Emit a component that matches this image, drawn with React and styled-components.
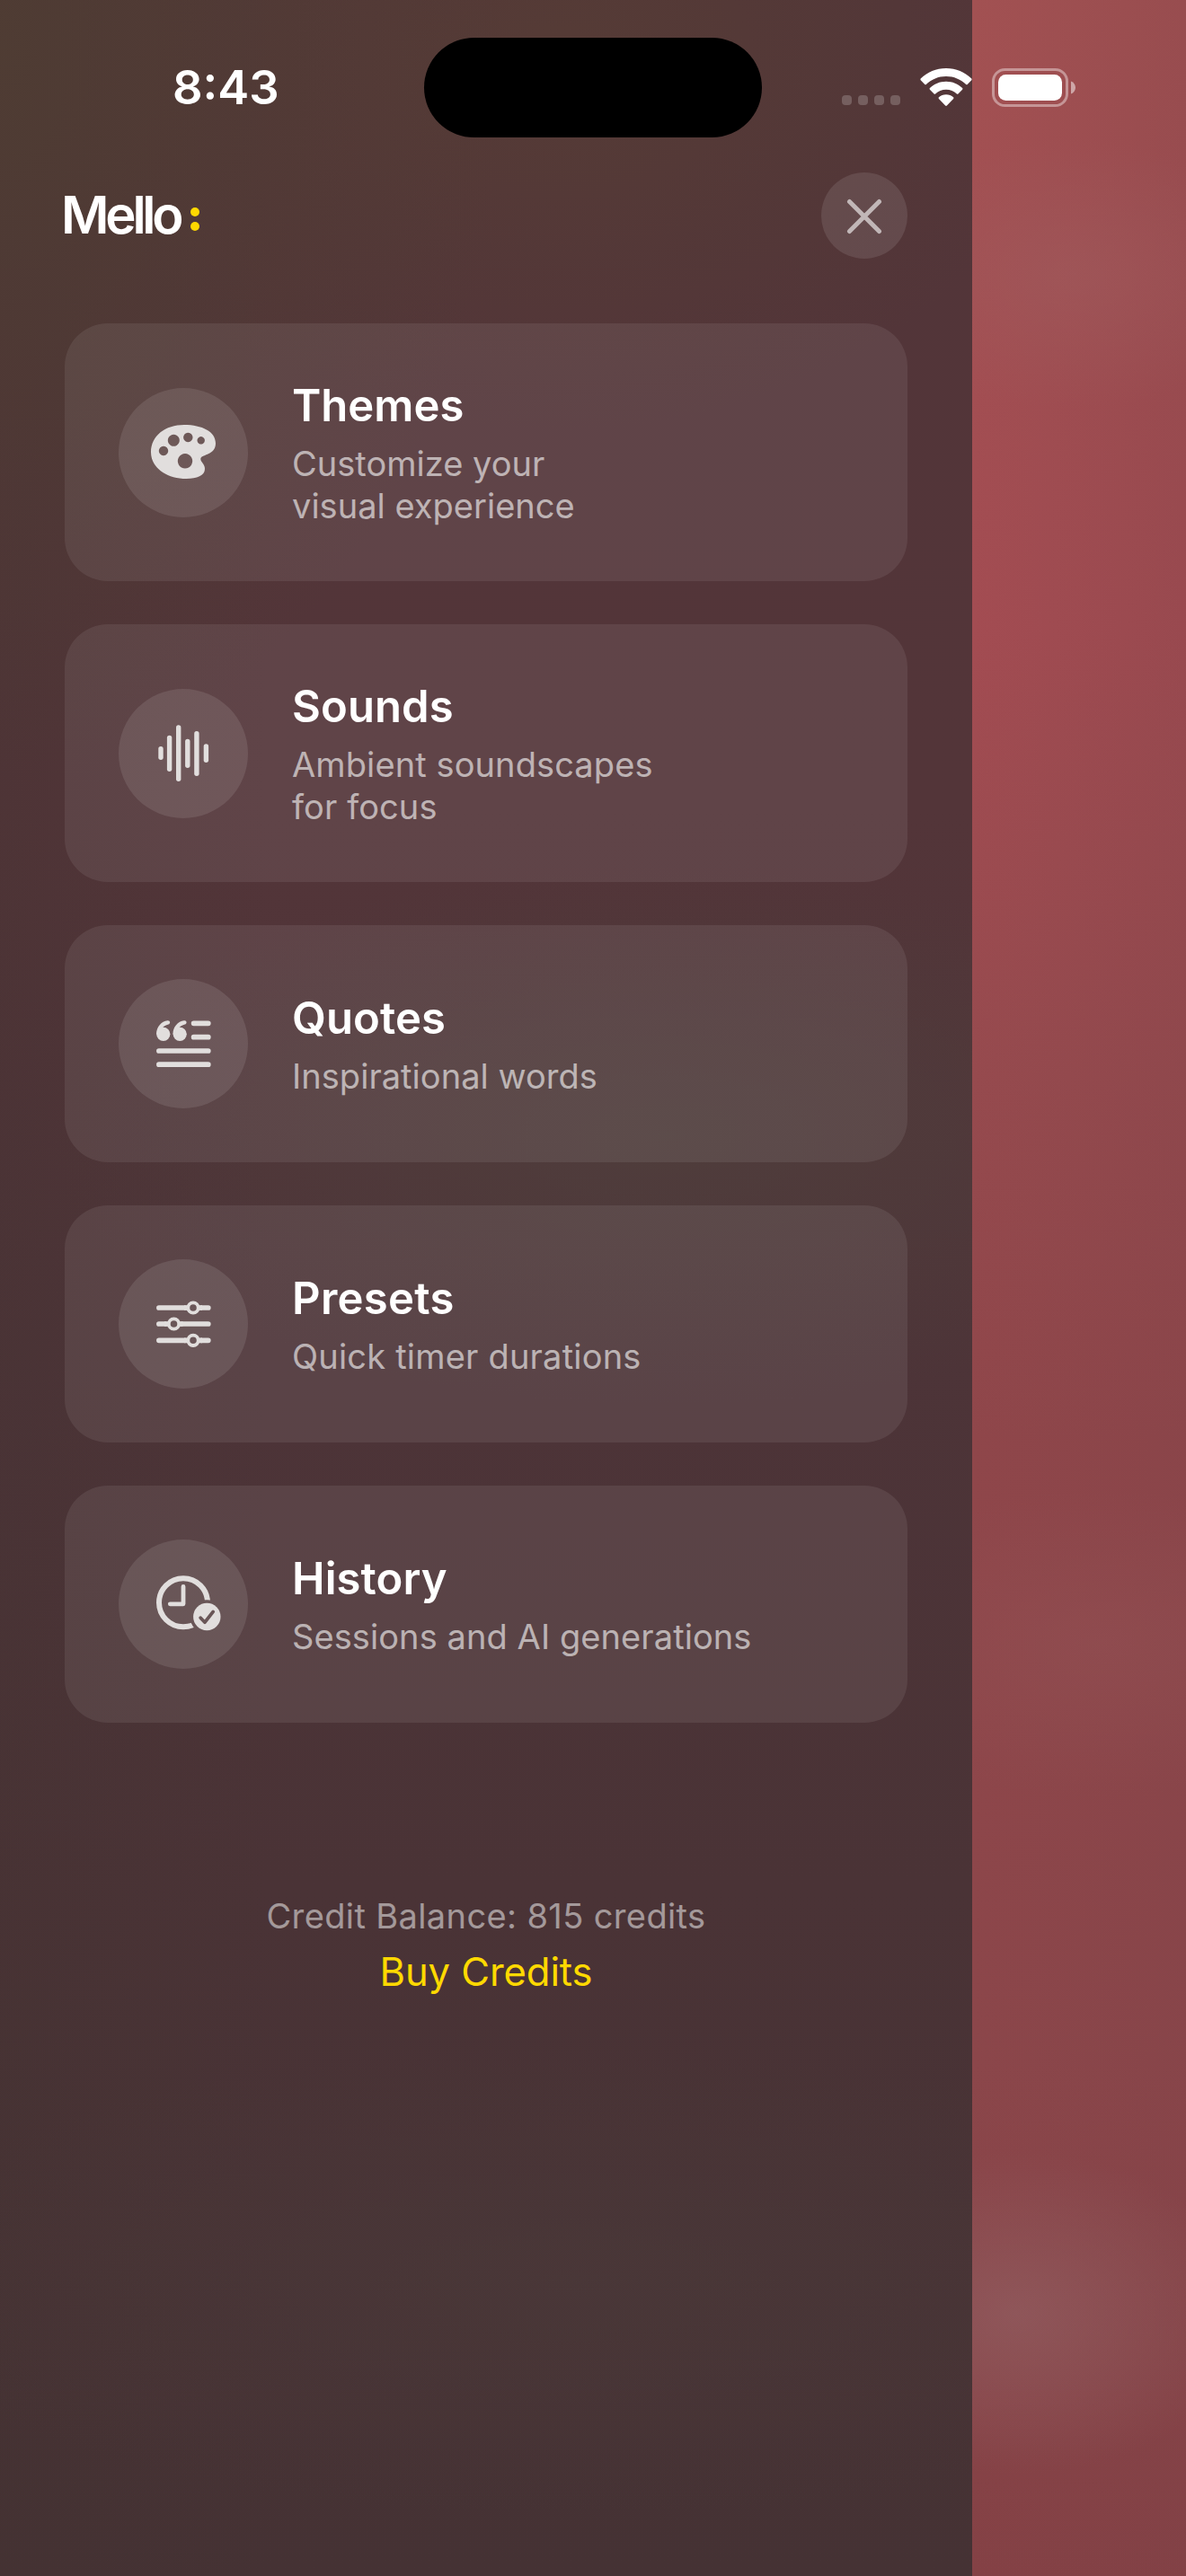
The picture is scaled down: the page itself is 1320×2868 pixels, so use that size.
import React from "react";
import styled, { createGlobalStyle } from "styled-components";

const menuItems = [
	{
		id: "themes",
		title: "Themes",
		lines: ["Customize your", "visual experience"],
		titleSpacing: 0,
		spacing: 0.02,
	},
	{
		id: "sounds",
		title: "Sounds",
		lines: ["Ambient soundscapes", "for focus"],
		titleSpacing: 0.1,
		spacing: 0.1,
	},
	{
		id: "quotes",
		title: "Quotes",
		lines: ["Inspirational words"],
		titleSpacing: 0.1,
		spacing: 0.04,
	},
	{
		id: "presets",
		title: "Presets",
		lines: ["Quick timer durations"],
		titleSpacing: 0.3,
		spacing: 0.2,
	},
	{
		id: "history",
		title: "History",
		lines: ["Sessions and AI generations"],
		titleSpacing: 0.1,
		spacing: 0.08,
	},
];

const soundBars = [
	[47, 64, 79],
	[56.6, 51.7, 92],
	[66.7, 40.3, 103],
	[76.8, 55.7, 88],
	[86.9, 47, 97],
	[97.4, 61.3, 82],
];

const QuoteMark = ({ x }) => (
	<g transform={`translate(${x} 0)`}>
		<circle cx="49.8" cy="61.3" r="7.6" />
		<path d="M42.1 61C42 53.5 47.5 47 54.5 46.2C57.6 45.8 58.2 49.6 55.4 50.5C51.5 51.6 48.6 53.6 47.8 56.5L50 62Z" />
	</g>
);

const icons = {
	themes: (
		<path
			fillRule="evenodd"
			d="M73 41C93 41 108 48.5 108 61.5C108 75.5 91.3 73.5 91.3 79C91.3 82.5 96 84.5 96 90C96 97.5 87 101 75.5 101C53 101 36 88.5 36 71.5C36 53 52 41 73 41ZM50 64.8a5.2 5.2 0 1 0 .01 0ZM61.3 51.8a6.5 6.5 0 1 0 .01 0ZM77.3 49.8a5.2 5.2 0 1 0 .01 0ZM91.7 54.1a4.2 4.2 0 1 0 .01 0ZM74 73.1a8.2 8.2 0 1 0 .01 0Z"
		/>
	),
	sounds: (
		<g stroke="currentColor" strokeWidth="5.4" strokeLinecap="round">
			{soundBars.map(([x, top, bottom]) => (
				<line key={x} x1={x} x2={x} y1={top + 2.7} y2={bottom - 2.7} />
			))}
		</g>
	),
	quotes: (
		<g>
			<QuoteMark x={0} />
			<QuoteMark x={18.4} />
			<g stroke="currentColor" strokeWidth="5.7" strokeLinecap="round">
				<path d="M83.6 49.3H99.8M83.6 64.7H99.8M44.9 80H99.8M44.9 95.2H99.8" />
			</g>
		</g>
	),
	presets: (
		<g fill="none" stroke="currentColor" strokeLinecap="round">
			<path
				strokeWidth="5.7"
				d="M44.9 54H74M92 54H99.8M44.9 72H52M70.5 72H99.8M44.9 90.3H74M92 90.3H99.8"
			/>
			<g strokeWidth="3.8">
				<circle cx="83" cy="54" r="5.7" />
				<circle cx="61.5" cy="72" r="5.7" />
				<circle cx="83" cy="90.3" r="5.7" />
			</g>
			<path
				strokeWidth="5.7"
				strokeLinecap="butt"
				d="M73 54H76.5M89.5 54H93M51 72H55M68 72H71.5M73 90.3H76.5M89.5 90.3H93"
			/>
		</g>
	),
	history: (
		<g>
			<mask id="badge-gap">
				<rect width="144" height="144" fill="#fff" />
				<circle cx="98.3" cy="86" r="18.8" fill="#000" />
			</mask>
			<mask id="badge-check">
				<rect width="144" height="144" fill="#fff" />
				<path
					d="M91.2 87.2L96 92.2L105.2 80.4"
					fill="none"
					stroke="#000"
					strokeWidth="3.8"
					strokeLinecap="round"
					strokeLinejoin="round"
				/>
			</mask>
			<circle
				cx="72"
				cy="70.3"
				r="27"
				fill="none"
				stroke="currentColor"
				strokeWidth="6"
				mask="url(#badge-gap)"
			/>
			<path
				d="M72 52.5V71.8H57.3"
				fill="none"
				stroke="currentColor"
				strokeWidth="4.8"
				strokeLinecap="round"
				strokeLinejoin="round"
			/>
			<circle cx="98.3" cy="86" r="15.2" mask="url(#badge-check)" />
		</g>
	),
};

const App = () => {
	return (
		<>
			<GlobalStyle />
			<Screen>
				<Drawer>
					<Header>
						<Brand>
							<BrandName>Mello</BrandName>
							<BrandDots>
								<i />
								<i />
							</BrandDots>
						</Brand>
						<CloseButton aria-label="Close">
							<svg width="96" height="96" viewBox="0 0 96 96">
								<path d="M31.5 32.5L64.5 65.5M64.5 32.5L31.5 65.5" />
							</svg>
						</CloseButton>
					</Header>

					<Menu>
						{menuItems.map((item) => (
							<Card key={item.id} $tall={item.lines.length > 1}>
								<IconCircle>
									<svg width="144" height="144" viewBox="0 0 144 144" fill="currentColor">
										{icons[item.id]}
									</svg>
								</IconCircle>
								<CardText>
									<CardTitle $spacing={item.titleSpacing}>{item.title}</CardTitle>
									{item.lines.map((line) => (
										<CardLine key={line} $spacing={item.spacing}>
											{line}
										</CardLine>
									))}
								</CardText>
							</Card>
						))}
					</Menu>

					<Footer>
						<Balance>Credit Balance: 815 credits</Balance>
						<BuyLink>Buy Credits</BuyLink>
					</Footer>
				</Drawer>

				{/* system status bar floats over the drawer */}
				<StatusBar>
					<Time>8:43</Time>
					<Island />
					<Indicators>
						<Signal>
							<i />
							<i />
							<i />
							<i />
						</Signal>
						<svg width="58" height="43" viewBox="0 0 58 43">
							<path
								fill="#fff"
								d="M29 0C40 0 50 4.4 57.3 11.6Q58 12.4 57.3 13.2L52.7 18Q52 18.7 51.2 18C45.4 12.4 37.6 9 29 9S12.6 12.4 6.8 18Q6 18.7 5.3 18L.7 13.2Q0 12.4 .7 11.6C8 4.4 18 0 29 0ZM29 14.7C36 14.7 42.4 17.5 47.1 22Q47.9 22.9 47.1 23.7L42.4 28.5Q41.7 29.2 40.9 28.5C37.8 25.6 33.6 23.8 29 23.8S20.2 25.6 17.1 28.5Q16.3 29.2 15.6 28.5L10.9 23.7Q10.1 22.9 10.9 22C15.6 17.5 22 14.7 29 14.7ZM29 29.3C32.2 29.3 35 30.4 37.1 32.3Q37.9 33.1 37.1 33.9L29.9 41.5Q29 42.4 28.1 41.5L20.9 33.9Q20.1 33.1 20.9 32.3C23 30.4 25.8 29.3 29 29.3Z"
							/>
						</svg>
						<svg width="94" height="43" viewBox="0 0 94 43">
							<rect
								x="1.5"
								y="1.5"
								width="82"
								height="40"
								rx="13"
								fill="none"
								stroke="#fff"
								strokeOpacity="0.4"
								strokeWidth="3"
							/>
							<rect x="7" y="7" width="71" height="29" rx="8.5" fill="#fff" />
							<path d="M88 14.5C91 15.6 93 18.3 93 21.5S91 27.4 88 28.5Z" fill="#fff" fillOpacity="0.5" />
						</svg>
					</Indicators>
				</StatusBar>
			</Screen>
		</>
	);
};

export default App;

const GlobalStyle = createGlobalStyle`
	* {
		box-sizing: border-box;
	}

	body {
		margin: 0;
		font-family: Inter, "Liberation Sans", sans-serif;
	}
`;

const Screen = styled.div`
	position: relative;
	width: 1320px;
	height: 2868px;
	overflow: hidden;
	background:
		radial-gradient(ellipse 240px 150px at 1190px 305px, rgba(160, 92, 94, 0.5), transparent),
		radial-gradient(ellipse 320px 170px at 1220px 1830px, rgba(146, 80, 83, 0.55), transparent),
		radial-gradient(ellipse 260px 180px at 1130px 2575px, rgba(146, 94, 97, 0.7), transparent),
		linear-gradient(90deg, transparent 1082px, rgba(126, 66, 72, 0.28) 1320px),
		linear-gradient(180deg, #a25152 0, #a34c52 700px, #964a4e 1200px, #8f464a 1600px, #8e464a 1900px, #8b464a 2300px, #844145 2868px);
`;

const Drawer = styled.aside`
	width: 1082px;
	height: 2868px;
	padding: 192px 72px 0;
	display: flex;
	flex-direction: column;
	background:
		radial-gradient(ellipse 560px 800px at 0 60px, rgba(79, 61, 51, 0.9), transparent),
		radial-gradient(ellipse 560px 420px at 620px 60px, rgba(86, 61, 53, 0.8), transparent),
		radial-gradient(ellipse 680px 300px at 740px 1265px, rgba(79, 64, 61, 0.75), transparent),
		radial-gradient(ellipse 800px 260px at 640px 2540px, rgba(74, 57, 57, 0.7), transparent),
		linear-gradient(90deg, rgba(66, 50, 48, 0.3), transparent 300px),
		linear-gradient(180deg, #523539 0, #533539 900px, #4d3438 1500px, #4a3336 2100px, #453234 2868px);
`;

const Header = styled.header`
	display: flex;
	align-items: center;
	justify-content: space-between;
	height: 96px;
	margin-bottom: 72px;
`;

const Brand = styled.div`
	display: flex;
	align-items: center;
`;

const BrandName = styled.h1`
	margin: 0 0 2px -4px;
	width: 144px;
	color: #fff;
	font-size: 58px;
	font-weight: 600;
	line-height: 94px;
	letter-spacing: -4.2px;
	white-space: nowrap;
`;

const BrandDots = styled.span`
	display: flex;
	flex-direction: column;
	gap: 6px;
	margin-top: 8px;

	i {
		width: 10px;
		height: 10px;
		border-radius: 50%;
		background: #ffd900;
	}
`;

const CloseButton = styled.button`
	width: 96px;
	height: 96px;
	padding: 0;
	border: 0;
	border-radius: 50%;
	background: rgba(255, 255, 255, 0.1);

	svg {
		display: block;
	}

	path {
		stroke: rgba(255, 255, 255, 0.6);
		stroke-width: 5;
		stroke-linecap: round;
	}
`;

const Menu = styled.nav`
	display: flex;
	flex-direction: column;
	gap: 48px;
`;

const Card = styled.div`
	display: flex;
	align-items: center;
	gap: 48px;
	height: ${({ $tall }) => ($tall ? 287 : 264)}px;
	padding: 0 60px;
	border-radius: 48px;
	background: rgba(255, 255, 255, 0.08);
`;

const IconCircle = styled.div`
	flex: none;
	width: 144px;
	height: 144px;
	border-radius: 50%;
	background: rgba(255, 255, 255, 0.1);
	color: #e1dedd;

	svg {
		display: block;
	}
`;

const CardText = styled.div`
	display: flex;
	flex-direction: column;
	padding-left: 1px;
	white-space: nowrap;
`;

const CardTitle = styled.h2`
	margin: 0 0 10px;
	color: #fff;
	font-size: 49px;
	font-weight: 600;
	line-height: 62px;
	letter-spacing: ${({ $spacing }) => $spacing}px;
`;

const CardLine = styled.span`
	color: rgba(255, 255, 255, 0.6);
	font-size: 38px;
	line-height: 47px;
	letter-spacing: ${({ $spacing }) => $spacing}px;
`;

const Footer = styled.footer`
	display: flex;
	flex-direction: column;
	align-items: center;
	margin-top: 192px;
	white-space: nowrap;
`;

const Balance = styled.span`
	color: rgba(255, 255, 255, 0.5);
	font-size: 38px;
	line-height: 47px;
	letter-spacing: 0.38px;
`;

const BuyLink = styled.a`
	margin-top: 12px;
	color: #ffd900;
	font-size: 43.6px;
	line-height: 54px;
	letter-spacing: -0.1px;
`;

const StatusBar = styled.div`
	position: absolute;
	top: 0;
	left: 0;
	display: flex;
	width: 1320px;
	height: 194px;
	align-items: center;
	padding-left: 192px;
`;

const Time = styled.span`
	width: 280px;
	color: #fff;
	font-size: 52.5px;
	font-weight: 600;
	line-height: 64px;
	letter-spacing: 0;
`;

const Island = styled.div`
	width: 376px;
	height: 111px;
	border-radius: 56px;
	background: #000;
`;

const Indicators = styled.div`
	display: flex;
	align-items: center;
	margin-left: 89px;

	svg:last-child {
		margin-left: 22px;
	}
`;

const Signal = styled.div`
	display: flex;
	gap: 7px;
	width: 87px;
	margin-top: 29px;

	i {
		width: 11px;
		height: 11px;
		border-radius: 4px;
		background: rgba(255, 255, 255, 0.2);
	}
`;
